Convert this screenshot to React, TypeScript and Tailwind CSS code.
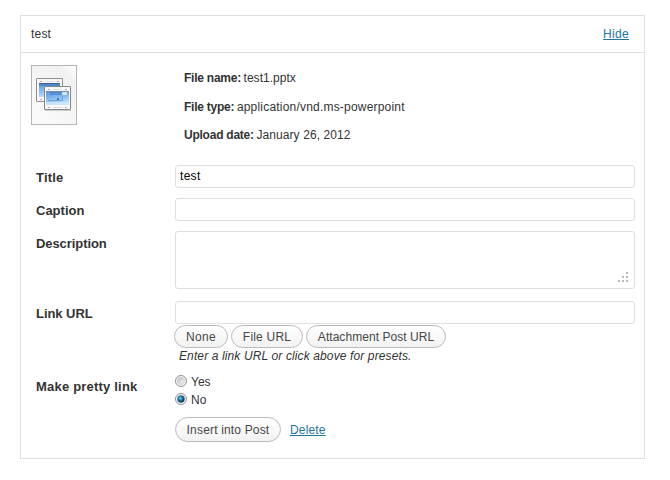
import React from 'react';

function FileIcon() {
  return (
    <svg width="46" height="60" viewBox="0 0 46 60" className="block shrink-0">
      <defs>
        <linearGradient id="paper" x1="1" y1="0" x2="0.3" y2="1">
          <stop offset="0" stopColor="#ffffff" />
          <stop offset="0.22" stopColor="#f1f1f1" />
          <stop offset="0.55" stopColor="#f5f5f5" />
          <stop offset="1" stopColor="#fafafa" />
        </linearGradient>
        <linearGradient id="screen" x1="0" y1="0" x2="0.3" y2="1">
          <stop offset="0" stopColor="#5b98dc" />
          <stop offset="0.5" stopColor="#86baee" />
          <stop offset="1" stopColor="#bfe2fb" />
        </linearGradient>
      </defs>
      <rect x="0.5" y="0.5" width="45" height="59" fill="url(#paper)" stroke="#b5b5b5" />
      <rect x="5.5" y="13.5" width="26" height="23" rx="0.5" fill="#f7f7f7" stroke="#909090" />
      <rect x="8" y="19" width="21" height="13" fill="url(#screen)" />
      <rect x="8" y="18" width="21" height="1" fill="#44618a" />
      <rect x="8" y="19" width="21" height="2" fill="#4a89d2" />
      <path d="M9 16.5h2M26 16.5h2M9 34.5h2" stroke="#b0b0b0" />
      <path d="M14 16.5h9" stroke="#e2e2e2" />
      <rect x="14" y="45" width="26" height="1" fill="#cfcfcf" />
      <rect x="13.5" y="21.5" width="26" height="23" rx="0.5" fill="#f9f9f9" stroke="#868686" />
      <rect x="15" y="27" width="23" height="13" fill="url(#screen)" />
      <rect x="15" y="26" width="23" height="1" fill="#7089a6" />
      <rect x="19" y="27" width="12" height="3" fill="#3f7cc6" opacity="0.55" />
      <rect x="31" y="27" width="5" height="3" fill="#e0effc" opacity="0.85" />
      <path d="M17 35.5h14.5v-5" fill="none" stroke="#66a0df" />
      <rect x="26" y="33" width="2" height="2" fill="#3579c4" />
      <rect x="15" y="37" width="23" height="3" fill="#cfeafc" opacity="0.65" />
      <path d="M17 24.5h2M34 24.5h2M17 42.5h2M34 42.5h2" stroke="#ababab" />
      <path d="M22 24.5h9M22 42.5h9" stroke="#e2e2e2" />
    </svg>
  );
}

function Info({ name, value, space }: { name: string; value: string; space: string }) {
  return (
    <p className="h-[28.5px] text-[12px] leading-[18px] whitespace-nowrap">
      <b className="tracking-[-0.24px]">{name}</b>
      <span className={`ml-[2.6px] ${space}`}>{value}</span>
    </p>
  );
}

function Row({
  label,
  className,
  labelSpace = 'tracking-normal',
  children,
}: {
  label: string;
  className: string;
  labelSpace?: string;
  children: React.ReactNode;
}) {
  return (
    <div className={`flex pl-[15px] ${className}`}>
      <div className={`w-[139px] shrink-0 pt-1 text-[13px] leading-[18px] font-bold ${labelSpace}`}>{label}</div>
      <div>{children}</div>
    </div>
  );
}

const field = 'block w-[460px] rounded-[3px] border border-[#dfdfdf] bg-white text-[12px] text-black outline-none';
const button =
  'rounded-full border border-[#bbbbbb] bg-linear-to-b from-white to-[#f2f2f2] text-center text-[12px] whitespace-nowrap text-[#464646]';

function Radio({ label, checked }: { label: string; checked?: boolean }) {
  return (
    <div className="flex h-[18px] items-center gap-1 text-[12px] leading-[18px]">
      <svg width="12" height="12" viewBox="0 0 12 12">
        <defs>
          <linearGradient id="well" x1="0" y1="0" x2="1" y2="1">
            <stop offset="0" stopColor="#bcbcbc" />
            <stop offset="1" stopColor="#f7f7f7" />
          </linearGradient>
          <radialGradient id="dot" cx="0.4" cy="0.4" r="0.6">
            <stop offset="0" stopColor="#8ee0fb" />
            <stop offset="0.4" stopColor="#2585b8" />
            <stop offset="1" stopColor="#0c2f4c" />
          </radialGradient>
        </defs>
        <circle cx="6" cy="6" r="5.5" fill="#fafafa" stroke="#8e8f8f" />
        <circle cx="6" cy="6" r="3.7" fill="url(#well)" stroke={checked ? '#8ba0b0' : '#c5c5c5'} strokeWidth="0.6" />
        {checked && <circle cx="6" cy="6" r="3.5" fill="url(#dot)" />}
      </svg>
      <span className="pt-[2px]">{label}</span>
    </div>
  );
}

export default function App() {
  return (
    <div className="h-[480px] w-[670px] bg-white pt-[15px] pl-5 font-['Liberation_Sans',Arial,sans-serif] text-[#333333]">
      <div className="h-[444px] w-[625px] border border-[#dfdfdf]">
        <div className="flex h-[37px] items-center justify-between border-b border-[#dfdfdf] pr-[15px] pl-[10px] text-[12px]">
          <span className="tracking-[0.2px]">test</span>
          <a className="tracking-[0.3px] text-[#21759b] underline">Hide</a>
        </div>
        <div className="flex h-[112px] pt-3 pl-[10px]">
          <FileIcon />
          <div className="pt-[4px] pl-[107px]">
            <Info name="File name:" value="test1.pptx" space="tracking-[0.03px]" />
            <Info name="File type:" value="application/vnd.ms-powerpoint" space="tracking-[0.2px]" />
            <Info name="Upload date:" value="January 26, 2012" space="tracking-[0.09px]" />
          </div>
        </div>
        <Row label="Title" className="h-[33px]" labelSpace="tracking-[0.2px]">
          <input className={`${field} h-[23px] px-1 pb-[2px] tracking-[0.3px]`} defaultValue="test" />
        </Row>
        <Row label="Caption" className="h-[33px]">
          <input className={`${field} h-[23px]`} />
        </Row>
        <Row label="Description" className="h-[70px]" labelSpace="tracking-[-0.08px]">
          <div className={`${field} flex h-[58px] items-end justify-end pr-[6px] pb-[6px]`}>
            <svg width="10" height="10" viewBox="0 0 10 10" fill="#b8b8b8" shapeRendering="crispEdges">
              <path d="M8 0h2v2h-2zM4 4h2v2h-2zM8 4h2v2h-2zM0 8h2v2h-2zM4 8h2v2h-2zM8 8h2v2h-2z" />
            </svg>
          </div>
        </Row>
        <Row label="Link URL" className="h-[73px]" labelSpace="tracking-[-0.05px]">
          <input className={`${field} h-[23px]`} />
          <div className="mt-px -ml-px flex gap-[3px]">
            <button className={`${button} h-[23px] w-[54px] tracking-[0.3px]`}>None</button>
            <button className={`${button} h-[23px] w-[72px] tracking-[0.2px]`}>File URL</button>
            <button className={`${button} h-[23px] w-[140px] tracking-[0.05px]`}>Attachment Post URL</button>
          </div>
          <p className="pl-1 text-[12px] leading-[16px] tracking-[0.12px] italic">
            Enter a link URL or click above for presets.
          </p>
        </Row>
        <Row label="Make pretty link" className="h-[84px]" labelSpace="tracking-[0.2px]">
          <div className="-mt-[2px]">
            <Radio label="Yes" />
            <Radio label="No" checked />
            <div className="mt-[9px] flex items-center gap-[9px] text-[12px]">
              <button className={`${button} h-[25px] w-[106px] tracking-[0.17px]`}>Insert into Post</button>
              <a className="tracking-[0.15px] text-[#21759b] underline">Delete</a>
            </div>
          </div>
        </Row>
      </div>
    </div>
  );
}
